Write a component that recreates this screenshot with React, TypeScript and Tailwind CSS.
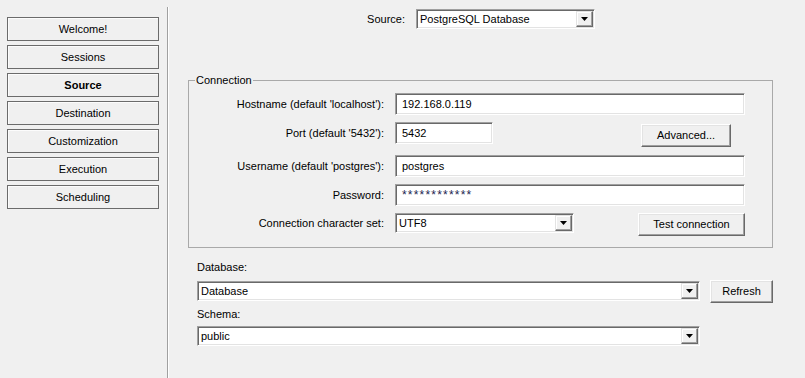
import type { ReactNode } from 'react'

const navItems = ['Welcome!', 'Sessions', 'Source', 'Destination', 'Customization', 'Execution', 'Scheduling']

// sunken edit box, classic windows look
function Field({ value, className = '' }: { value: string; className?: string }) {
  return (
    <div
      className={`flex items-center bg-white border border-t-[#a0a0a0] border-l-[#a0a0a0] border-r-white border-b-white shadow-[inset_1px_1px_0_#696969,inset_-1px_-1px_0_#e3e3e3] pl-[6px] ${className}`}
    >
      {value}
    </div>
  )
}

function Combo({ value, className = '' }: { value: string; className?: string }) {
  return (
    <div
      className={`flex items-stretch bg-white border border-t-[#a0a0a0] border-l-[#a0a0a0] border-r-white border-b-white shadow-[inset_1px_1px_0_#696969,inset_-1px_-1px_0_#e3e3e3] p-[1px] ${className}`}
    >
      <div className="flex-1 flex items-center pl-[2px]">{value}</div>
      <div className="w-[17px] flex items-center justify-center bg-[#f0f0f0] border border-t-[#e3e3e3] border-l-[#e3e3e3] border-r-[#696969] border-b-[#696969] shadow-[inset_-1px_-1px_0_#a0a0a0,inset_1px_1px_0_#fff]">
        <svg width="7" height="4" viewBox="0 0 7 4">
          <polygon points="0,0 7,0 3.5,4" fill="#000" />
        </svg>
      </div>
    </div>
  )
}

function Btn({ children, className = '' }: { children: ReactNode; className?: string }) {
  return (
    <div
      className={`flex items-center justify-center bg-[#f0f0f0] border border-t-white border-l-white border-r-[#696969] border-b-[#696969] shadow-[inset_-1px_-1px_0_#a0a0a0,inset_1px_1px_0_#e3e3e3] ${className}`}
    >
      {children}
    </div>
  )
}

function Label({ children, className = '' }: { children: ReactNode; className?: string }) {
  return <div className={`w-[195px] flex items-center justify-end ${className}`}>{children}</div>
}

export default function App() {
  return (
    <div className="w-[805px] h-[378px] overflow-hidden bg-[#f0f0f0] flex text-[11px] text-black font-['Liberation_Sans',Arial,sans-serif]">
      {/* Left navigation */}
      <nav className="ml-[7px] mt-[17px] w-[152px] flex flex-col gap-[4px]">
        {navItems.map((item) => (
          <div
            key={item}
            className={`h-[24px] flex items-center justify-center border border-[#6b6b6b] shadow-[inset_1px_1px_0_#fcfcfc] ${item === 'Source' ? 'font-bold' : ''}`}
          >
            {item}
          </div>
        ))}
      </nav>

      {/* Divider */}
      <div className="ml-[8px] mt-[7px] w-[2px] h-[371px] border-l border-[#a0a0a0] bg-white" />

      {/* Main */}
      <main className="flex-1 flex flex-col">
        <div className="mt-[9px] flex items-center">
          <div className="w-[236px] text-right">Source:</div>
          <Combo value="PostgreSQL Database" className="ml-[11px] w-[179px] h-[20px]" />
        </div>

        {/* Connection group */}
        <div className="relative mt-[51px] ml-[19px] w-[585px] h-[168px] border border-[#a9a9a9] pt-[12px]">
          <span className="absolute left-[6px] -top-[8px] px-[1px] bg-[#f0f0f0] leading-[14px]">Connection</span>

          <div className="flex">
            <Label className="h-[22px]">Hostname (default 'localhost'):</Label>
            <Field value="192.168.0.119" className="ml-[11px] w-[350px] h-[22px]" />
          </div>

          <div className="flex items-start mt-[7px]">
            <Label className="h-[22px]">Port (default '5432'):</Label>
            <Field value="5432" className="ml-[11px] w-[98px] h-[22px]" />
            <Btn className="ml-[148px] mt-[2px] w-[90px] h-[23px]">Advanced...</Btn>
          </div>

          <div className="flex mt-[8px]">
            <Label className="h-[22px]">Username (default 'postgres'):</Label>
            <Field value="postgres" className="ml-[11px] w-[350px] h-[22px]" />
          </div>

          <div className="flex mt-[7px]">
            <Label className="h-[22px]">Password:</Label>
            <Field
              value="************"
              className="ml-[11px] w-[350px] h-[22px] text-[12px] tracking-[1.2px] text-[#1c2450]"
            />
          </div>

          <div className="flex items-start mt-[7px]">
            <Label className="h-[20px]">Connection character set:</Label>
            <Combo value="UTF8" className="ml-[11px] w-[179px] h-[20px]" />
            <Btn className="ml-[64px] w-[107px] h-[23px]">Test connection</Btn>
          </div>
        </div>

        {/* Database / schema */}
        <div className="ml-[28px] flex flex-col">
          <div className="mt-[12px] h-[14px] leading-[14px]">Database:</div>
          <div className="mt-[7px] flex items-start">
            <Combo value="Database" className="w-[503px] h-[20px]" />
            <Btn className="ml-[10px] -mt-[1px] w-[63px] h-[23px]">Refresh</Btn>
          </div>
          <div className="mt-[4px] h-[14px] leading-[14px]">Schema:</div>
          <Combo value="public" className="mt-[5px] w-[503px] h-[20px]" />
        </div>
      </main>
    </div>
  )
}
